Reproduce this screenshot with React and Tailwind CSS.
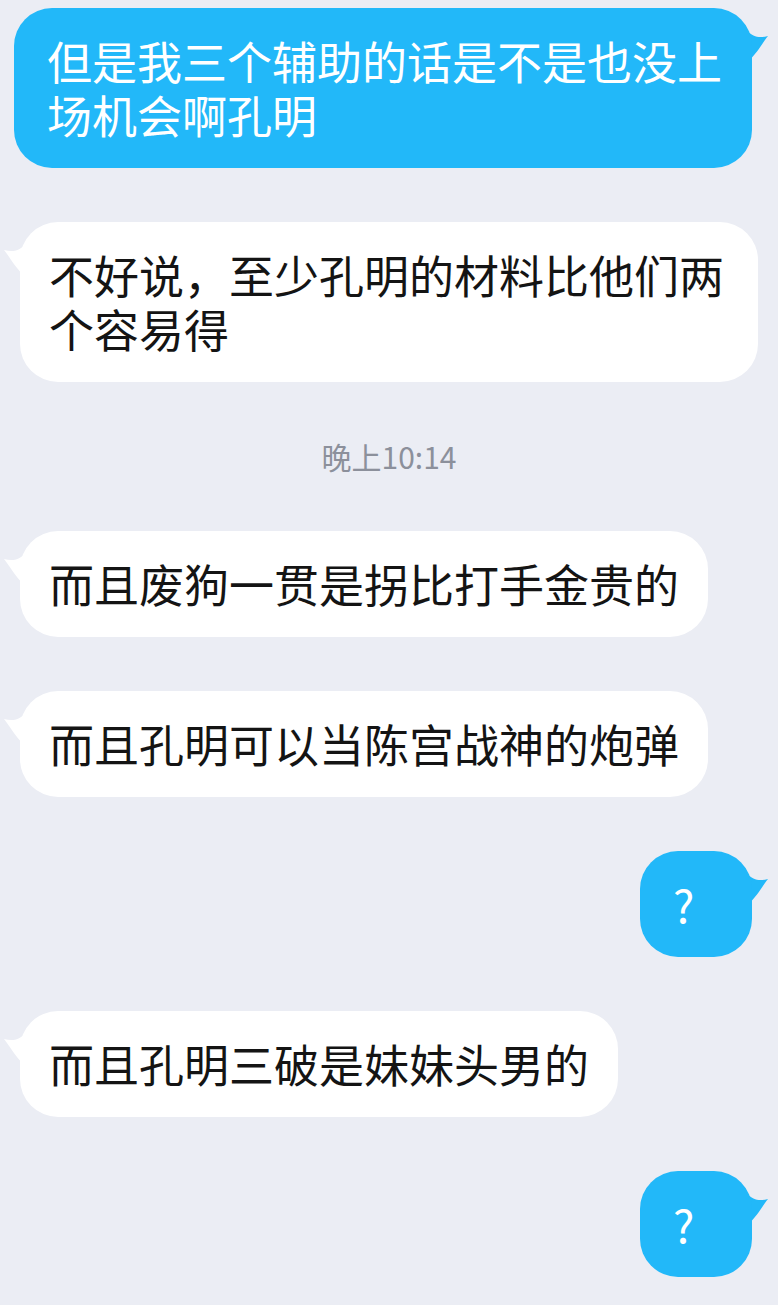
import React from "react";

const FONT = { fontFamily: '"Noto Sans CJK SC", "Noto Sans", sans-serif' };

function TailRight({ color }) {
  return (
    <svg
      className="absolute top-[20px] right-[-16px]"
      width="22"
      height="36"
      viewBox="0 0 22 36"
    >
      <path d="M0 2 C 8 10, 14 10, 22 8 C 17 14, 12 24, 0 36 Z" fill={color} />
    </svg>
  );
}

function TailLeft({ color }) {
  return (
    <svg
      className="absolute top-[20px] left-[-16px]"
      width="22"
      height="36"
      viewBox="0 0 22 36"
    >
      <path d="M22 2 C 14 10, 8 10, 0 8 C 5 14, 10 24, 22 36 Z" fill={color} />
    </svg>
  );
}

function Sent({ children }) {
  return (
    <div className="self-end mr-[26px] relative">
      <TailRight color="#22b8f9" />
      <div className="relative bg-[#22b8f9] text-white rounded-[38px] max-w-[738px] min-w-[112px] pl-[33px] pr-[29px] py-[26px] text-[45px] leading-[54px]">
        {children}
      </div>
    </div>
  );
}

function Received({ children }) {
  return (
    <div className="self-start ml-[20px] relative">
      <TailLeft color="#ffffff" />
      <div className="relative bg-white text-[#141414] rounded-[38px] max-w-[738px] pl-[29px] pr-[29px] py-[26px] text-[45px] leading-[54px]">
        {children}
      </div>
    </div>
  );
}

export default function App() {
  return (
    <div
      className="w-[778px] min-h-[1305px] bg-[#ebedf4] pt-[8px] flex flex-col gap-[54px] overflow-hidden"
      style={FONT}
    >
      <Sent>但是我三个辅助的话是不是也没上场机会啊孔明</Sent>
      <Received>不好说，至少孔明的材料比他们两个容易得</Received>
      <div className="text-center text-[30px] leading-[41px] text-[#8c909b]">晚上10:14</div>
      <Received>而且废狗一贯是拐比打手金贵的</Received>
      <Received>而且孔明可以当陈宫战神的炮弹</Received>
      <Sent>?</Sent>
      <Received>而且孔明三破是妹妹头男的</Received>
      <Sent>?</Sent>
    </div>
  );
}
